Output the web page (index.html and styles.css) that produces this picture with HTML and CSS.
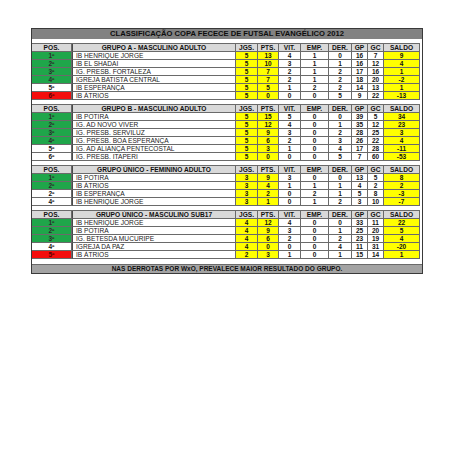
FILE: index.html
```html
<!DOCTYPE html>
<html lang="pt">
<head>
<meta charset="utf-8">
<title>Classificação Copa FECECE</title>
<link rel="stylesheet" href="styles.css">
</head>
<body>
<div class="sheet">
  <div class="title">CLASSIFICAÇÃO COPA FECECE DE FUTSAL EVANGÉLICO 2012</div>
  <div class="spacer"></div>

  <div class="group">
    <div class="row head"><div class="c">POS.</div><div class="c">GRUPO A - MASCULINO ADULTO</div><div class="c">JGS.</div><div class="c">PTS.</div><div class="c">VIT.</div><div class="c">EMP.</div><div class="c">DER.</div><div class="c">GP</div><div class="c">GC</div><div class="c">SALDO</div></div>
    <div class="row"><div class="c pos g">1º</div><div class="c team">IB HENRIQUE JORGE</div><div class="c y">5</div><div class="c y">13</div><div class="c">4</div><div class="c">1</div><div class="c">0</div><div class="c">16</div><div class="c">7</div><div class="c y">9</div></div>
    <div class="row"><div class="c pos g">2º</div><div class="c team">IB EL SHADAI</div><div class="c y">5</div><div class="c y">10</div><div class="c">3</div><div class="c">1</div><div class="c">1</div><div class="c">16</div><div class="c">12</div><div class="c y">4</div></div>
    <div class="row"><div class="c pos g">3º</div><div class="c team">IG. PRESB. FORTALEZA</div><div class="c y">5</div><div class="c y">7</div><div class="c">2</div><div class="c">1</div><div class="c">2</div><div class="c">17</div><div class="c">16</div><div class="c y">1</div></div>
    <div class="row"><div class="c pos g">4º</div><div class="c team">IGREJA BATISTA CENTRAL</div><div class="c y">5</div><div class="c y">7</div><div class="c">2</div><div class="c">1</div><div class="c">2</div><div class="c">18</div><div class="c">20</div><div class="c y">-2</div></div>
    <div class="row"><div class="c pos">5º</div><div class="c team">IB ESPERANÇA</div><div class="c y">5</div><div class="c y">5</div><div class="c">1</div><div class="c">2</div><div class="c">2</div><div class="c">14</div><div class="c">13</div><div class="c y">1</div></div>
    <div class="row"><div class="c pos r">6º</div><div class="c team">IB ÁTRIOS</div><div class="c y">5</div><div class="c y">0</div><div class="c">0</div><div class="c">0</div><div class="c">5</div><div class="c">9</div><div class="c">22</div><div class="c y">-13</div></div>
  </div>
  <div class="spacer"></div>

  <div class="group">
    <div class="row head"><div class="c">POS.</div><div class="c">GRUPO B - MASCULINO ADULTO</div><div class="c">JGS.</div><div class="c">PTS.</div><div class="c">VIT.</div><div class="c">EMP.</div><div class="c">DER.</div><div class="c">GP</div><div class="c">GC</div><div class="c">SALDO</div></div>
    <div class="row"><div class="c pos g">1º</div><div class="c team">IB POTIRA</div><div class="c y">5</div><div class="c y">15</div><div class="c">5</div><div class="c">0</div><div class="c">0</div><div class="c">39</div><div class="c">5</div><div class="c y">34</div></div>
    <div class="row"><div class="c pos g">2º</div><div class="c team">IG. AD NOVO VIVER</div><div class="c y">5</div><div class="c y">12</div><div class="c">4</div><div class="c">0</div><div class="c">1</div><div class="c">35</div><div class="c">12</div><div class="c y">23</div></div>
    <div class="row"><div class="c pos g">3º</div><div class="c team">IG. PRESB. SERVILUZ</div><div class="c y">5</div><div class="c y">9</div><div class="c">3</div><div class="c">0</div><div class="c">2</div><div class="c">28</div><div class="c">25</div><div class="c y">3</div></div>
    <div class="row"><div class="c pos g">4º</div><div class="c team">IG. PRESB. BOA ESPERANÇA</div><div class="c y">5</div><div class="c y">6</div><div class="c">2</div><div class="c">0</div><div class="c">3</div><div class="c">26</div><div class="c">22</div><div class="c y">4</div></div>
    <div class="row"><div class="c pos">5º</div><div class="c team">IG. AD ALIANÇA PENTECOSTAL</div><div class="c y">5</div><div class="c y">3</div><div class="c">1</div><div class="c">0</div><div class="c">4</div><div class="c">17</div><div class="c">28</div><div class="c y">-11</div></div>
    <div class="row"><div class="c pos">6º</div><div class="c team">IG. PRESB. ITAPERI</div><div class="c y">5</div><div class="c y">0</div><div class="c">0</div><div class="c">0</div><div class="c">5</div><div class="c">7</div><div class="c">60</div><div class="c y">-53</div></div>
  </div>
  <div class="spacer"></div>

  <div class="group">
    <div class="row head"><div class="c">POS.</div><div class="c">GRUPO ÚNICO - FEMININO ADULTO</div><div class="c">JGS.</div><div class="c">PTS.</div><div class="c">VIT.</div><div class="c">EMP.</div><div class="c">DER.</div><div class="c">GP</div><div class="c">GC</div><div class="c">SALDO</div></div>
    <div class="row"><div class="c pos g">1º</div><div class="c team">IB POTIRA</div><div class="c y">3</div><div class="c y">9</div><div class="c">3</div><div class="c">0</div><div class="c">0</div><div class="c">13</div><div class="c">5</div><div class="c y">8</div></div>
    <div class="row"><div class="c pos g">2º</div><div class="c team">IB ÁTRIOS</div><div class="c y">3</div><div class="c y">4</div><div class="c">1</div><div class="c">1</div><div class="c">1</div><div class="c">4</div><div class="c">2</div><div class="c y">2</div></div>
    <div class="row"><div class="c pos">2º</div><div class="c team">IB ESPERANÇA</div><div class="c y">3</div><div class="c y">2</div><div class="c">0</div><div class="c">2</div><div class="c">1</div><div class="c">5</div><div class="c">8</div><div class="c y">-3</div></div>
    <div class="row"><div class="c pos">4º</div><div class="c team">IB HENRIQUE JORGE</div><div class="c y">3</div><div class="c y">1</div><div class="c">0</div><div class="c">1</div><div class="c">2</div><div class="c">3</div><div class="c">10</div><div class="c y">-7</div></div>
  </div>
  <div class="spacer"></div>

  <div class="group">
    <div class="row head"><div class="c">POS.</div><div class="c">GRUPO ÚNICO - MASCULINO SUB17</div><div class="c">JGS.</div><div class="c">PTS.</div><div class="c">VIT.</div><div class="c">EMP.</div><div class="c">DER.</div><div class="c">GP</div><div class="c">GC</div><div class="c">SALDO</div></div>
    <div class="row"><div class="c pos g">1º</div><div class="c team">IB HENRIQUE JORGE</div><div class="c y">4</div><div class="c y">12</div><div class="c">4</div><div class="c">0</div><div class="c">0</div><div class="c">33</div><div class="c">11</div><div class="c y">22</div></div>
    <div class="row"><div class="c pos g">2º</div><div class="c team">IB POTIRA</div><div class="c y">4</div><div class="c y">9</div><div class="c">3</div><div class="c">0</div><div class="c">1</div><div class="c">25</div><div class="c">20</div><div class="c y">5</div></div>
    <div class="row"><div class="c pos g">3º</div><div class="c team">IG. BETESDA MUCURIPE</div><div class="c y">4</div><div class="c y">6</div><div class="c">2</div><div class="c">0</div><div class="c">2</div><div class="c">23</div><div class="c">19</div><div class="c y">4</div></div>
    <div class="row"><div class="c pos">4º</div><div class="c team">IGREJA DA PAZ</div><div class="c y">4</div><div class="c y">0</div><div class="c">0</div><div class="c">0</div><div class="c">4</div><div class="c">11</div><div class="c">31</div><div class="c y">-20</div></div>
    <div class="row"><div class="c pos r">5º</div><div class="c team">IB ÁTRIOS</div><div class="c y">2</div><div class="c y">3</div><div class="c">1</div><div class="c">0</div><div class="c">1</div><div class="c">15</div><div class="c">14</div><div class="c y">1</div></div>
  </div>
  <div class="spacer wide"></div>

  <div class="footer">NAS DERROTAS POR WxO, PREVALECE MAIOR RESULTADO DO GRUPO.</div>
</div>
</body>
</html>
```

FILE: styles.css
```css
html, body {
  margin: 0;
  padding: 0;
  background: #ffffff;
}

body {
  font-family: "Liberation Sans", Arial, sans-serif;
  color: #111111;
}

.sheet {
  margin: 28px 0 0 31px;
  width: 390px;
  border: 1px solid #3a3a3a;
  background: #ffffff;
}

.title {
  height: 10px;
  line-height: 10px;
  background: #828282;
  color: #0d0d0d;
  font-size: 7.6px;
  font-weight: bold;
  text-align: center;
  white-space: nowrap;
}

.spacer {
  height: 4px;
}

.spacer.wide {
  height: 5px;
}

.group {
  width: 388px;
  border-top: 1px solid #6a6a6a;
}

.row {
  display: grid;
  grid-template-columns: 40px 164px 22px 21px 22px 28px 23px 16px 16px 36px;
  height: 8px;
}

.c {
  box-sizing: border-box;
  height: 8px;
  border-right: 1px solid #6a6a6a;
  border-bottom: 1px solid #6a6a6a;
  font-size: 6.5px;
  font-weight: bold;
  line-height: 7px;
  text-align: center;
  white-space: nowrap;
  overflow: hidden;
  background: #ffffff;
  color: #111111;
}

.head .c {
  background: #d9d9d9;
  font-size: 6.6px;
}

.c.team {
  text-align: left;
  padding-left: 3px;
  font-weight: normal;
  font-size: 6.6px;
  color: #222222;
  border-left: 1px solid #4a4a4a;
}

.head .c:nth-child(2) {
  border-left: 1px solid #4a4a4a;
}

.c.g {
  background: #1fa64a;
  color: #2b2b2b;
}

.c.r {
  background: #f40d0d;
  color: #5a0000;
}

.c.y {
  background: #ffff00;
}

.footer {
  height: 8px;
  line-height: 8px;
  background: #a3a3a3;
  color: #111111;
  font-size: 6.5px;
  font-weight: bold;
  text-align: center;
  white-space: nowrap;
  border-top: 1px solid #6a6a6a;
}
```
